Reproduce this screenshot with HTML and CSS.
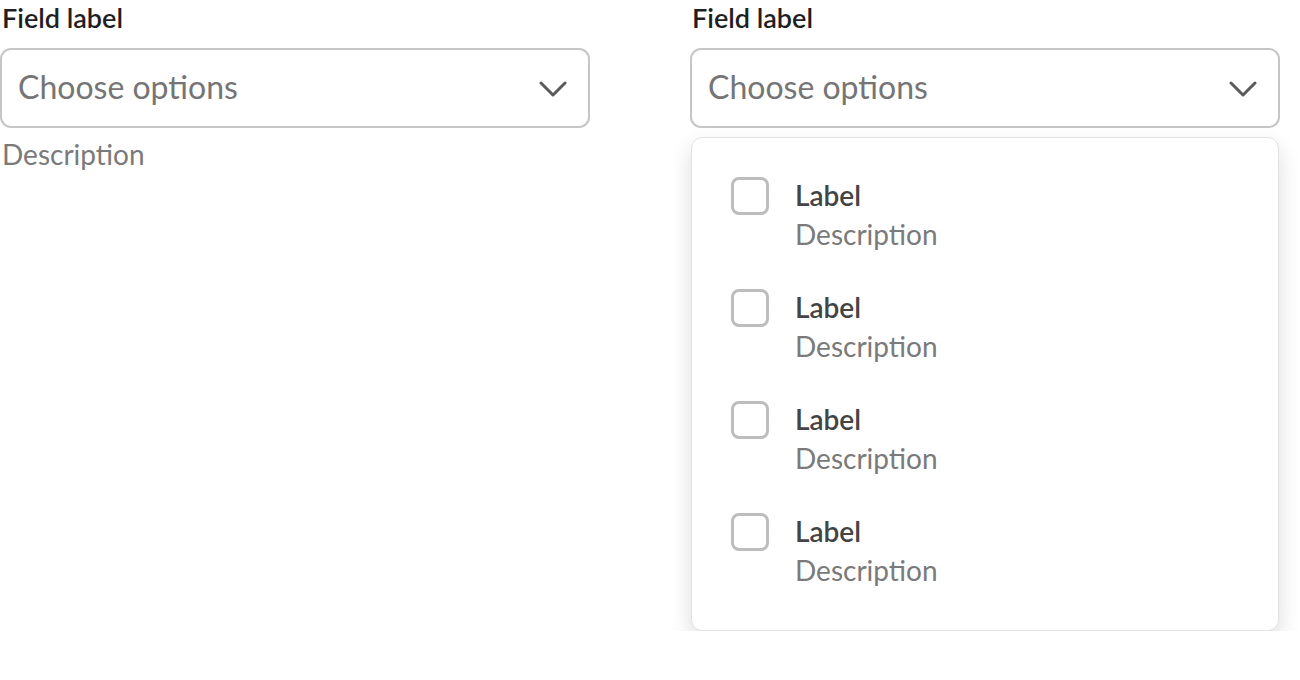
FILE: index.html
```html
<!DOCTYPE html>
<html lang="en">
<head>
  <meta charset="UTF-8">
  <title>Select</title>
  <link rel="stylesheet" href="styles.css">
</head>
<body>
  <div class="fields">
    <div class="field">
      <div class="fieldLabel">Field label</div>
      <div class="select">
        <span class="placeholder">Choose options</span>
        <svg class="chevron" width="28" height="18" viewBox="0 0 28 18"><path d="M2 3 L14 15 L26 3" fill="none" stroke="#5a5a5a" stroke-width="3" stroke-linecap="round" stroke-linejoin="round"/></svg>
      </div>
      <div class="fieldDesc">Description</div>
    </div>

    <div class="field">
      <div class="fieldLabel">Field label</div>
      <div class="select">
        <span class="placeholder">Choose options</span>
        <svg class="chevron" width="28" height="18" viewBox="0 0 28 18"><path d="M2 3 L14 15 L26 3" fill="none" stroke="#5a5a5a" stroke-width="3" stroke-linecap="round" stroke-linejoin="round"/></svg>
      </div>
      <div class="menu">
        <div class="option">
          <div class="box"></div>
          <div>
            <div class="optLabel">Label</div>
            <div class="optDesc">Description</div>
          </div>
        </div>
        <div class="option">
          <div class="box"></div>
          <div>
            <div class="optLabel">Label</div>
            <div class="optDesc">Description</div>
          </div>
        </div>
        <div class="option">
          <div class="box"></div>
          <div>
            <div class="optLabel">Label</div>
            <div class="optDesc">Description</div>
          </div>
        </div>
        <div class="option">
          <div class="box"></div>
          <div>
            <div class="optLabel">Label</div>
            <div class="optDesc">Description</div>
          </div>
        </div>
      </div>
    </div>
  </div>
</body>
</html>
```

FILE: styles.css
```css
body {
  margin: 0;
  background: #fff;
  font-family: Lato, "Open Sans", sans-serif;
}

.fields {
  display: flex;
  gap: 100px;
}
.field {
  width: 590px;
}

.fieldLabel {
  font-size: 27px;
  font-weight: 600;
  color: #1f1f1f;
  line-height: 36px;
  padding-left: 2px;
  margin-bottom: 12px;
}

.select {
  height: 76px;
  box-sizing: content-box;
  border: 2px solid #c6c6c6;
  border-radius: 11px;
  display: flex;
  align-items: center;
  justify-content: space-between;
  padding: 0 21px 0 16px;
}
.placeholder {
  font-size: 32px;
  color: #757575;
  margin-bottom: 4px;
}
.chevron {
  margin-top: 1px;
}

.fieldDesc {
  font-size: 28px;
  line-height: 34px;
  color: #7a7a7a;
  margin-top: 9px;
  padding-left: 2px;
}

/* dropdown */
.menu {
  margin-top: 9px;
  margin-left: 1px;
  width: 588px;
  box-sizing: border-box;
  border: 1px solid #e2e2e2;
  border-radius: 11px;
  background: #fff;
  box-shadow: 0 10px 22px rgba(0, 0, 0, 0.14);
  padding: 39px 0 39px 39px;
  display: flex;
  flex-direction: column;
  gap: 34px;
}
.option {
  display: flex;
  gap: 26px;
}
.box {
  width: 32px;
  height: 32px;
  border: 3px solid #bdbdbd;
  border-radius: 8px;
}
.optLabel {
  font-size: 28px;
  font-weight: 600;
  color: #444;
  line-height: 36px;
}
.optDesc {
  font-size: 28px;
  color: #7a7a7a;
  line-height: 42px;
}
```
